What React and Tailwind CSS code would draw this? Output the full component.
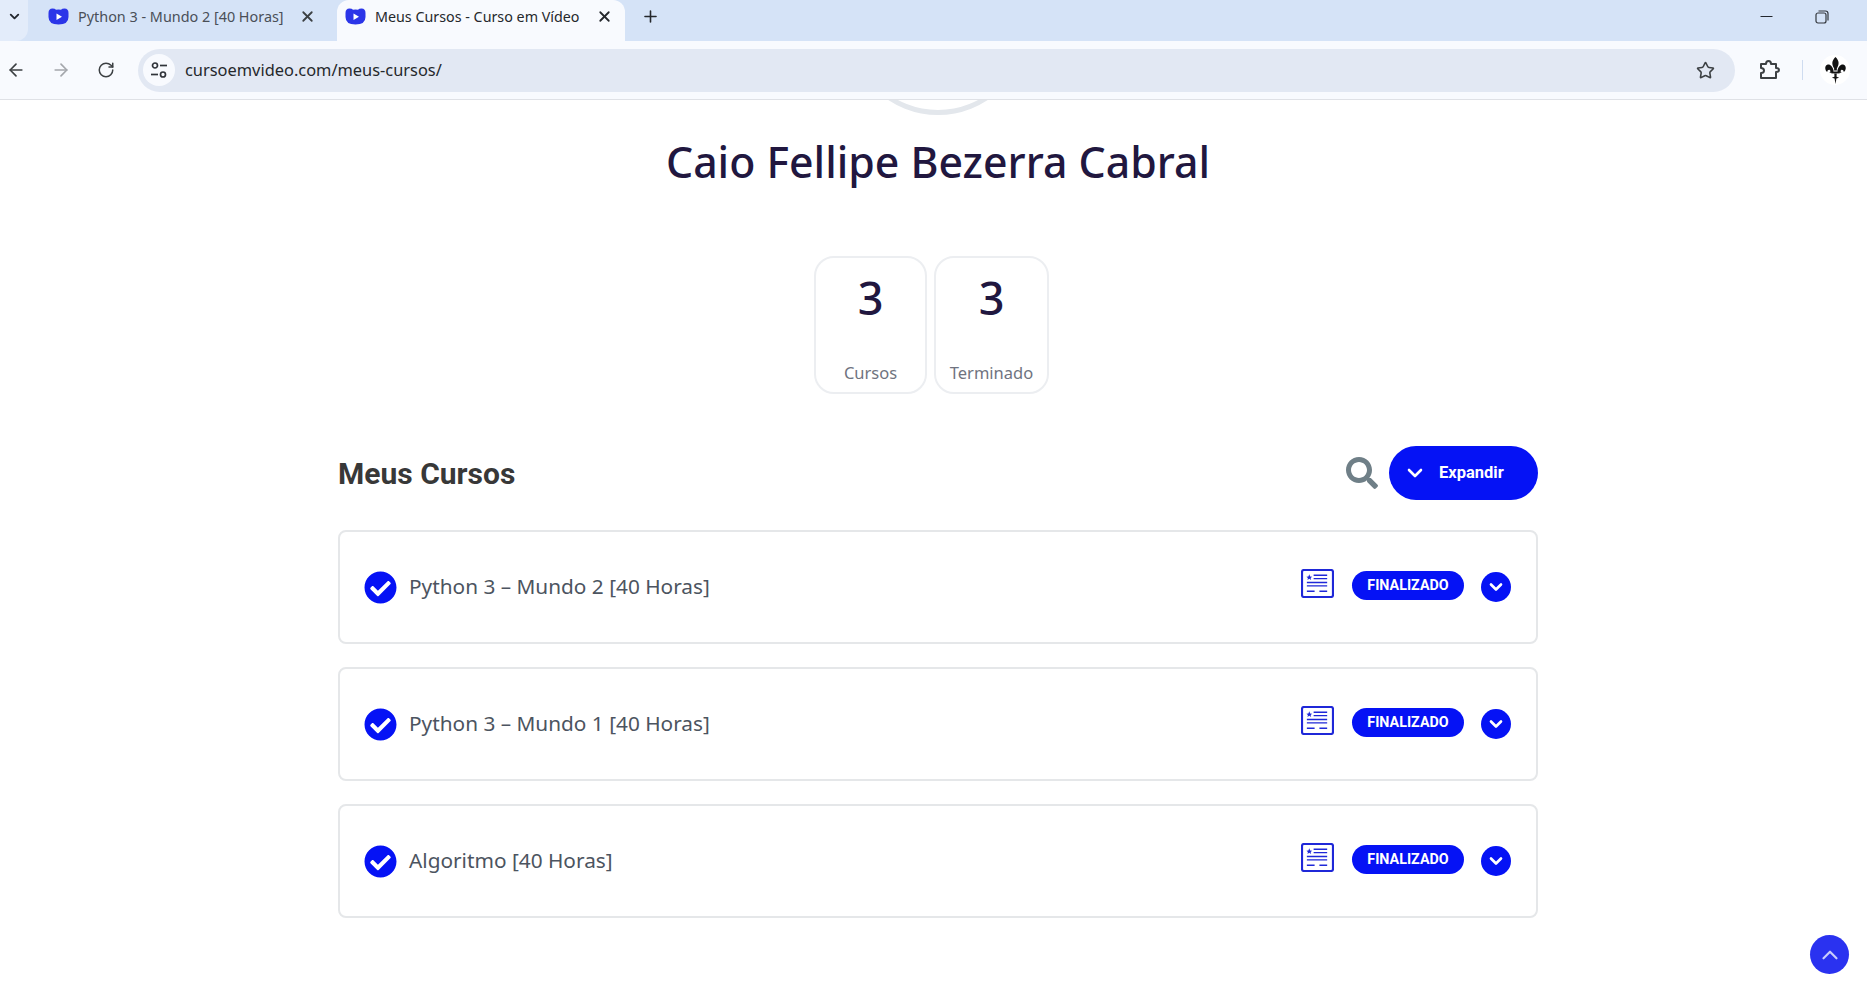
import React from "react";
import { X, Plus, ArrowLeft, ArrowRight, RotateCw, Star, Minus, ChevronDown, ChevronUp } from "lucide-react";
import { FaSearch, FaCheckCircle } from "react-icons/fa";

const Favicon = () => (
  <svg width="21" height="17" viewBox="0 0 21 17" className="shrink-0">
    <path d="M4.5 0.5 Q7 0.5 8 1.8 Q10.5 1.2 13 1.8 Q14 0.5 16.5 0.5 Q20.5 0.5 20.5 5 L20.5 9 Q20.5 16.5 10.5 16.5 Q0.5 16.5 0.5 9 L0.5 5 Q0.5 0.5 4.5 0.5Z" fill="#2b35e8" />
    <path d="M8.5 5.5 L14 8.8 L8.5 12.1Z" fill="#fff" />
  </svg>
);

const SiteInfo = () => (
  <svg width="18" height="18" viewBox="0 0 18 18" fill="none" stroke="#30343a" strokeWidth="1.7">
    <circle cx="5" cy="4.5" r="2.5" />
    <path d="M10 4.5 H17" />
    <path d="M1 13.5 H8" />
    <circle cx="13" cy="13.5" r="2.5" />
  </svg>
);

const Puzzle = () => (
  <svg width="22" height="22" viewBox="0 0 22 22" fill="none" stroke="#3c4043" strokeWidth="2" strokeLinejoin="round">
    <path d="M3 5 H8 Q8 2 10.5 2 Q13 2 13 5 H18 V9 Q21 9 21 11 Q21 13 18 13 V19 H3 V14 Q6 14 6 11.5 Q6 9 3 9Z" />
  </svg>
);

const Restore = () => (
  <svg width="14" height="14" viewBox="0 0 14 14" fill="none" stroke="#33373d" strokeWidth="1.2">
    <rect x="1" y="3" width="10" height="10" rx="2" />
    <path d="M3.5 1 H10.5 Q13 1 13 3.5 V10.5" />
  </svg>
);

const Fleur = () => (
  <svg width="21" height="27" viewBox="0 0 20 26" fill="#111">
    <path d="M10 0 C13.5 3.5 14 6.5 11.3 11 L11.3 13 H8.7 L8.7 11 C6 6.5 6.5 3.5 10 0Z" />
    <path d="M8.2 13.4 C7.5 9 4.5 6.5 2 7.5 C-0.5 8.5 -0.5 12.5 2 14.5 C2.2 12.8 3.3 12 4.4 12.4 C5.5 12.9 5.2 14.6 4 15 C6 15.6 7.8 15 8.2 13.4Z" />
    <path d="M11.8 13.4 C12.5 9 15.5 6.5 18 7.5 C20.5 8.5 20.5 12.5 18 14.5 C17.8 12.8 16.7 12 15.6 12.4 C14.5 12.9 14.8 14.6 16 15 C14 15.6 12.2 15 11.8 13.4Z" />
    <rect x="6" y="14" width="8" height="1.8" />
    <path d="M8.8 15.8 H11.2 L10.7 22 L10 26 L9.3 22Z" />
    <path d="M6.5 20 L10 18.5 L13.5 20 L10 21Z" />
  </svg>
);

const Certificate = () => (
  <svg width="33" height="29" viewBox="0 0 34 30" fill="none" stroke="#1f28d8" className="shrink-0">
    <rect x="1" y="1" width="32" height="28" rx="2" strokeWidth="2.2" />
    <path d="M13 6.5 H27 M13 10 H27 M6 14 H27 M6 17.5 H27 M6 23 H14 M19 23 H27" strokeWidth="1.4" />
    <path d="M8.5 5.5 L9.4 7.7 L11.5 7.9 L9.9 9.3 L10.4 11.3 L8.5 10.2 L6.6 11.3 L7.1 9.3 L5.5 7.9 L7.6 7.7Z" fill="#1f28d8" stroke="none" />
  </svg>
);

const Stat = ({ value, label, width }) => (
  <div className={`${width} h-[138px] border-2 border-[#eceef1] rounded-[20px] bg-white flex flex-col items-center justify-between pt-[9px] pb-[7px]`}>
    <span className="text-[45px] leading-[62px] text-[#21173f] font-medium font-['Noto_Sans',sans-serif]">{value}</span>
    <span className="text-[16.5px] leading-[24px] text-[#6f7380] font-['Noto_Sans',sans-serif]">{label}</span>
  </div>
);

const Course = ({ title }) => (
  <div className="h-[114px] border-2 border-[#e5e7e9] rounded-[8px] bg-white flex items-center pl-[25px] pr-[25px]">
    <FaCheckCircle className="text-[#0512f5] text-[33px] shrink-0 -ml-[1px]" />
    <span className="ml-[12px] text-[20.8px] text-[#4c5460] font-['Noto_Sans',sans-serif] flex-1">{title}</span>
    <div className="flex items-start -mt-[3px]">
      <Certificate />
      <span className="ml-[18px] mt-[2px] w-[112px] h-[29px] rounded-full bg-[#0512f5] text-white text-[14.3px] font-bold font-['Roboto',sans-serif] flex items-center justify-center">FINALIZADO</span>
      <span className="ml-[17px] mt-[3px] w-[30px] h-[30px] rounded-full bg-[#0512f5] flex items-center justify-center">
        <ChevronDown size={20} strokeWidth={3.2} color="#fff" />
      </span>
    </div>
  </div>
);

export default function App() {
  return (
    <div className="h-[995px] w-[1867px] overflow-hidden bg-white relative font-['Noto_Sans',sans-serif]">
      {/* tab strip */}
      <div className="h-[41px] bg-[#d5e3f7] flex items-center">
        <div className="w-[28px] h-[41px] pb-[8px] flex items-center justify-center rounded-br-[12px] bg-[#e3ecfa]">
          <ChevronDown size={15} strokeWidth={3} color="#23272e" />
        </div>
        <div className="ml-[20px] w-[289px] flex items-center pb-[8px]">
          <Favicon />
          <span className="ml-[9px] w-[208px] text-[14.4px] text-[#4a4f57] whitespace-nowrap overflow-hidden">Python 3 - Mundo 2 [40 Horas]</span>
          <X size={17} strokeWidth={2.5} color="#3c4043" className="ml-[13px]" />
        </div>
        <div className="w-[288px] h-[41px] bg-[#f8fafe] rounded-t-[12px] flex items-center pl-[8px] pb-[8px]">
          <Favicon />
          <span className="ml-[9px] w-[212px] text-[14.3px] text-[#25282c] whitespace-nowrap overflow-hidden">Meus Cursos - Curso em Vídeo</span>
          <X size={17} strokeWidth={2.5} color="#25282c" className="ml-[9px]" />
        </div>
        <Plus size={19} strokeWidth={2} color="#25282c" className="ml-[16px] mb-[8px]" />
        <div className="ml-auto flex items-center pb-[8px]">
          <Minus size={19} strokeWidth={1.5} color="#23272e" />
          <span className="ml-[39px] mr-[38px]"><Restore /></span>
        </div>
      </div>
      {/* toolbar */}
      <div className="h-[59px] bg-[#f8fafe] border-b border-[#dfe1e6] flex items-center">
        <ArrowLeft size={20} strokeWidth={2} color="#3c4043" className="ml-[6px]" />
        <ArrowRight size={20} strokeWidth={2} color="#a4a7ac" className="ml-[25px]" />
        <RotateCw size={18} strokeWidth={2} color="#3c4043" className="ml-[26px]" />
        <div className="ml-[23px] w-[1597px] h-[43px] rounded-full bg-[#e2e8f3] flex items-center pl-[5px]">
          <span className="w-[32px] h-[32px] rounded-full bg-[#f8fafe] flex items-center justify-center"><SiteInfo /></span>
          <span className="ml-[10px] text-[16.4px] text-[#25282c] flex-1">cursoemvideo.com/meus-cursos/</span>
          <Star size={19} strokeWidth={2} color="#3c4043" className="mr-[20px]" />
        </div>
        <span className="ml-[23px]"><Puzzle /></span>
        <span className="ml-[22px] w-px h-[20px] bg-[#cfdcf0]" />
        <span className="ml-[17px] w-[30px] h-[30px] rounded-full bg-white flex items-center justify-center"><Fleur /></span>
      </div>
      {/* page */}
      <div className="w-[1200px] ml-[338px]">
        <div className="h-[15px] overflow-hidden flex justify-center">
          <div className="shrink-0 w-[180px] h-[180px] -mt-[165px] rounded-full border-[5px] border-[#e3e7ec]" />
        </div>
        <h1 className="mt-[17px] text-center text-[42.8px] leading-[60px] font-medium text-[#21173f] font-['Noto_Sans',sans-serif]">Caio Fellipe Bezerra Cabral</h1>
        <div className="mt-[64px] ml-[476px] flex gap-[7px]">
          <Stat value="3" label="Cursos" width="w-[113px]" />
          <Stat value="3" label="Terminado" width="w-[115px]" />
        </div>
        <div className="mt-[52px]">
          <div className="h-[54px] flex items-center">
            <h2 className="text-[30px] font-bold text-[#383838] font-['Roboto',sans-serif] flex-1">Meus Cursos</h2>
            <FaSearch className="text-[32px] text-[#6f7f87] mr-[11px]" />
            <div className="w-[149px] h-[54px] rounded-full bg-[#0512f5] flex items-center pl-[14px]">
              <ChevronDown size={24} strokeWidth={2.6} color="#fff" />
              <span className="ml-[12px] text-[16.5px] font-bold text-white font-['Roboto',sans-serif]">Expandir</span>
            </div>
          </div>
          <div className="mt-[30px] flex flex-col gap-[23px]">
            <Course title="Python 3 – Mundo 2 [40 Horas]" />
            <Course title="Python 3 – Mundo 1 [40 Horas]" />
            <Course title="Algoritmo [40 Horas]" />
          </div>
        </div>
      </div>
      <div className="absolute left-[1810px] top-[935px] w-[39px] h-[39px] rounded-full bg-[#2a32f0] flex items-center justify-center">
        <ChevronUp size={26} strokeWidth={2} color="#c9cdfb" />
      </div>
    </div>
  );
}
